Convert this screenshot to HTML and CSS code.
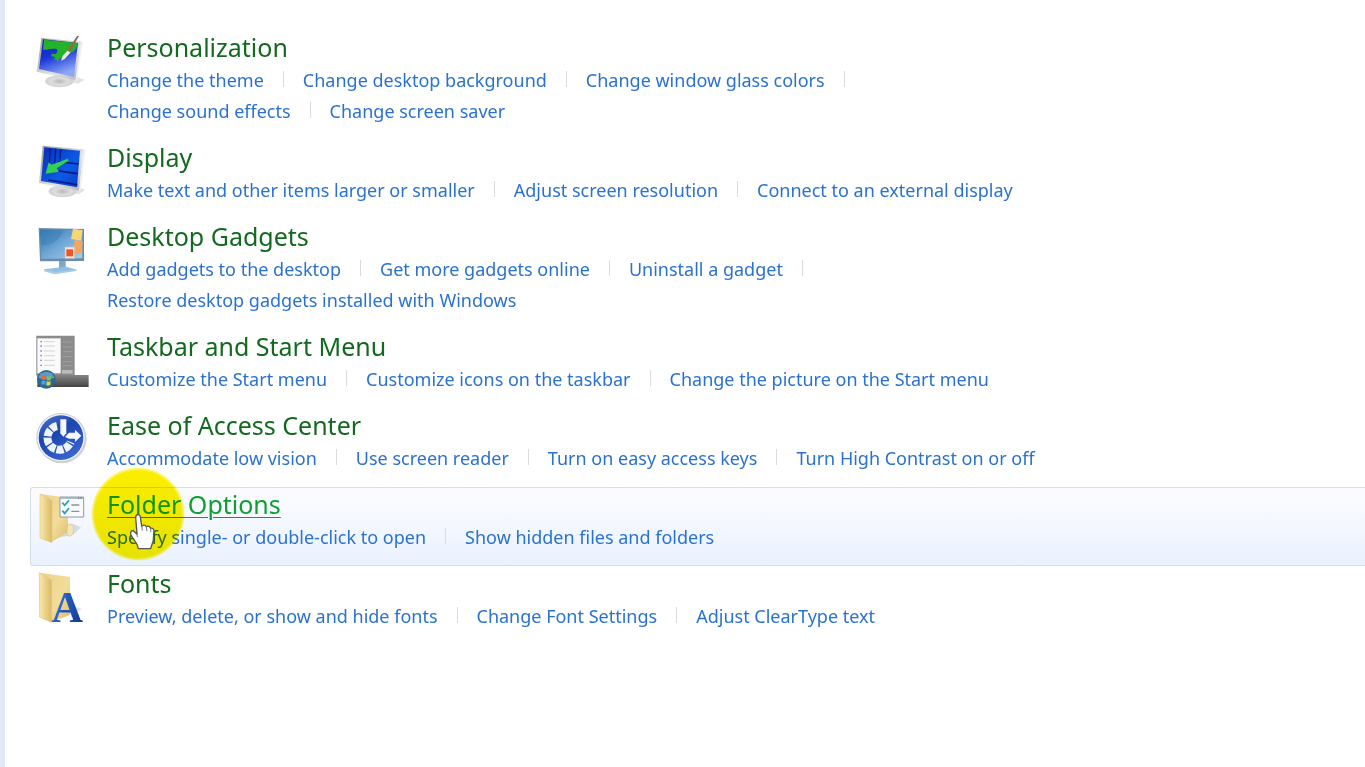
FILE: index.html
```html
<!DOCTYPE html>
<html lang="en">
<head>
<meta charset="utf-8">
<title>Appearance and Personalization</title>
<link rel="stylesheet" href="styles.css">
</head>
<body>
<main class="panel">
  <section class="category">
    <svg class="icon" viewBox="3 9 210 180" aria-hidden="true">
      <defs>
        <linearGradient id="screen" x1="0" y1="0" x2="0.4" y2="1"><stop offset="0" stop-color="#0b1fb5"/><stop offset="0.5" stop-color="#1c35d8"/><stop offset="1" stop-color="#8aa6f5"/></linearGradient>
        <linearGradient id="metal" x1="0" y1="0" x2="1" y2="1"><stop offset="0" stop-color="#9a9a9e"/><stop offset="0.6" stop-color="#e4e4e6"/><stop offset="1" stop-color="#b4b4b8"/></linearGradient>
        <radialGradient id="foot"><stop offset="0" stop-color="#b9b9ba"/><stop offset="0.6" stop-color="#dededf"/><stop offset="1" stop-color="#cfcfd1"/></radialGradient>
        <linearGradient id="folder-front" x1="0" y1="0" x2="1" y2="0"><stop offset="0" stop-color="#f9e9ae"/><stop offset="1" stop-color="#dcb964"/></linearGradient>
        <linearGradient id="folder-back" x1="0" y1="0" x2="1" y2="1"><stop offset="0" stop-color="#ecd48c"/><stop offset="0.6" stop-color="#f1dc99"/><stop offset="1" stop-color="#dcbb66"/></linearGradient>
      </defs>
      <path d="M140 138l24 8-20 12-24-6z" fill="#e3e3e6"/>
      <path d="M78 128h36l8 22H68z" fill="#b5b5b8"/>
      <ellipse cx="88" cy="151" rx="42" ry="18" fill="url(#foot)"/>
      <path d="M34 21l121 11-17 116L20 122z" fill="url(#metal)"/>
      <path d="M153 31l5 2-17 116-5-1z" fill="#f0f0f2"/>
      <path d="M39 25l105 11-12 102L27 114z" fill="url(#screen)"/>
      <path d="M42 26l100 10c0 15-6 26-23 29-6 15-22 18-29 17l-7 10-5-7-7 3 5-10-13-2 3-8 12 1c8-11 3-17-5-16-14-1-22 5-34 3z" fill="#25b22b"/>
      <path d="M112 59l10 5-18 20-11 5 5-14z" fill="#e6e8e9"/>
      <path d="M142 14l4 2-27 47-6-5z" fill="#b55a45"/>
      <path d="M142 14l4 2-9 16-5-3z" fill="#777"/>
    </svg>
    <div class="body">
      <h2 class="title"><a href="#">Personalization</a></h2>
      <ul class="tasks">
        <li><a href="#">Change the theme</a></li>
        <li><a href="#">Change desktop background</a></li>
        <li><a href="#">Change window glass colors</a></li>
        <li><a href="#">Change sound effects</a></li>
        <li><a href="#">Change screen saver</a></li>
      </ul>
    </div>
  </section>

  <section class="category">
    <svg class="icon" viewBox="3 15 210 180" aria-hidden="true">
      <defs><linearGradient id="blue" x1="0" y1="0" x2="1" y2="1"><stop offset="0" stop-color="#0a2bb4"/><stop offset="0.6" stop-color="#0d5be6"/><stop offset="1" stop-color="#0a3ac4"/></linearGradient></defs>
      <path d="M140 144l26 8-20 14-26-8z" fill="#e3e3e6"/>
      <path d="M84 138h36l6 20H76z" fill="#b5b5b8"/>
      <ellipse cx="98" cy="157" rx="42" ry="18" fill="url(#foot)"/>
      <path d="M38 20l122 11-12 124-121-23z" fill="url(#metal)"/>
      <path d="M160 31l6 2-14 121-5 1z" fill="#f0f0f2"/>
      <path d="M43 25l107 10-9 110-108-19z" fill="url(#blue)"/>
      <path d="M61 28l-3 50M77 29l-3 45M92 31l-2 30" stroke="#061f90" stroke-width="4"/>
      <path d="M85 68l61 7M78 95l65 9M55 123l87 14" stroke="#041c82" stroke-width="5"/>
      <path d="M113 59l3 6-36 23 7 10-40 6 9-34 9 7z" fill="#34cf56"/>
    </svg>
    <div class="body">
      <h2 class="title"><a href="#">Display</a></h2>
      <ul class="tasks">
        <li><a href="#">Make text and other items larger or smaller</a></li>
        <li><a href="#">Adjust screen resolution</a></li>
        <li><a href="#">Connect to an external display</a></li>
      </ul>
    </div>
  </section>

  <section class="category">
    <svg class="icon" viewBox="3 12 210 180" aria-hidden="true">
      <defs><linearGradient id="gadget" x1="0" y1="0" x2="1" y2="1"><stop offset="0" stop-color="#2f70ad"/><stop offset="0.5" stop-color="#70a8d6"/><stop offset="1" stop-color="#a5d0eb"/></linearGradient></defs>
      <path d="M87 124h20v25H87z" fill="#79a9cc"/>
      <path d="M42 151l66-8 32 9-66 13z" fill="#8fbee0"/>
      <path d="M42 151l32 8 66-7v4l-66 10-32-9z" fill="#a9cde5"/>
      <path d="M26 27l136 3v96l-132 1z" fill="#6b8ba6"/>
      <path d="M30 32l127 2v84l-123 1z" fill="url(#gadget)"/>
      <path d="M31 32l70 1c-12 32-34 46-68 47z" fill="#3c7fb9" opacity=".5"/>
      <path d="M129 29l29 5-5 31-30-5z" fill="#f5d875"/>
      <path d="M135 62l23 7-5 36-28-4z" fill="#f6a561"/>
      <path d="M105 84h29v34h-29z" fill="#eee8e6" stroke="#c7b9b4" stroke-width="2"/>
      <path d="M109 91h20v21h-20z" fill="#ed5525"/>
    </svg>
    <div class="body">
      <h2 class="title"><a href="#">Desktop Gadgets</a></h2>
      <ul class="tasks">
        <li><a href="#">Add gadgets to the desktop</a></li>
        <li><a href="#">Get more gadgets online</a></li>
        <li><a href="#">Uninstall a gadget</a></li>
        <li><a href="#">Restore desktop gadgets installed with Windows</a></li>
      </ul>
    </div>
  </section>

  <section class="category">
    <svg class="icon" viewBox="3 12 210 180" aria-hidden="true">
      <defs><linearGradient id="bar" x1="0" y1="0" x2="0" y2="1"><stop offset="0" stop-color="#858585"/><stop offset="1" stop-color="#444"/></linearGradient></defs>
      <path d="M19 20h115v120H19z" fill="#8b8b8b"/>
      <path d="M22 28h70v105H22z" fill="#fafafa"/>
      <path d="M42 38h32M42 51h32M42 66h32M42 80h32M42 94h32M42 109h32" stroke="#d4d4da" stroke-width="3"/>
      <path d="M31 38h5M31 51h5M31 66h5M31 80h5M31 94h5M31 109h5" stroke="#8485d0" stroke-width="4"/>
      <path d="M98 39h30M98 54h30M98 68h30M98 83h30M98 98h30M98 110h30" stroke="#9e9e9e" stroke-width="3"/>
      <path d="M96 123h32v11H96z" fill="#bbb"/>
      <path d="M22 138h154v36H22z" fill="url(#bar)"/>
      <circle cx="49" cy="151" r="28" fill="#286998"/>
      <path d="M25 146a25 25 0 0 1 48 0q-24 10-48 0" fill="#5e9cc0"/>
      <path d="M36 142q6-4 12-1l-1 12q-6-3-12 0z" fill="#ef6534"/>
      <path d="M51 142q6 3 12-1l-1 12q-6 3-12 1z" fill="#80c34e"/>
      <path d="M35 156q6-3 12 0l-1 12q-6-4-12-1z" fill="#45a5e7"/>
      <path d="M50 157q6 3 12-1l-1 12q-6 3-12 1z" fill="#f7cb42"/>
    </svg>
    <div class="body">
      <h2 class="title"><a href="#">Taskbar and Start Menu</a></h2>
      <ul class="tasks">
        <li><a href="#">Customize the Start menu</a></li>
        <li><a href="#">Customize icons on the taskbar</a></li>
        <li><a href="#">Change the picture on the Start menu</a></li>
      </ul>
    </div>
  </section>

  <section class="category">
    <svg class="icon" viewBox="3 21 210 180" aria-hidden="true">
      <defs><linearGradient id="disc" x1="0" y1="0" x2="0.6" y2="1"><stop offset="0" stop-color="#5475cc"/><stop offset="0.45" stop-color="#1b45b0"/><stop offset="1" stop-color="#3864cf"/></linearGradient></defs>
      <circle cx="96" cy="101" r="74" fill="#d8d8dc"/>
      <circle cx="93" cy="98" r="74" fill="#c5c9d1"/>
      <circle cx="93" cy="98" r="71" fill="#f4f5f8"/>
      <circle cx="93" cy="98" r="67" fill="url(#disc)"/>
      <path d="M81 63A36 36 0 1 0 122 111" fill="none" stroke="#eef2fb" stroke-width="24" stroke-dasharray="20 4"/>
      <path d="M91 43h18v42l-9 10-9-10z" fill="#f5f7fc"/>
      <path d="M105 96l12-13h18v-9l19 18-19 19v-10h-18z" fill="#f5f7fc"/>
    </svg>
    <div class="body">
      <h2 class="title"><a href="#">Ease of Access Center</a></h2>
      <ul class="tasks">
        <li><a href="#">Accommodate low vision</a></li>
        <li><a href="#">Use screen reader</a></li>
        <li><a href="#">Turn on easy access keys</a></li>
        <li><a href="#">Turn High Contrast on or off</a></li>
      </ul>
    </div>
  </section>

  <section class="category is-hover">
    <svg class="icon" viewBox="33 33 210 180" aria-hidden="true">
      <path d="M100 176l60-12 23-22-25-10z" fill="#d3dce6"/>
      <path d="M61 42l83 11v103l-50 31-34-15z" fill="url(#folder-back)"/>
      <path d="M143 135q18-10 18 12 0 20-12 22-10 0-8-17z" fill="#f3e5b7" stroke="#d6c28d" stroke-width="2"/>
      <path d="M60 42l36 19v127l-36-14z" fill="url(#folder-front)" stroke="#e2c880" stroke-width="2"/>
      <path d="M120 51h71v60h-71z" fill="#f8fafc" stroke="#909aa5" stroke-width="3"/>
      <path d="M121 54h69" stroke="#a4aeb9" stroke-width="5"/>
      <path d="M174 54h3M181 54h3" stroke="#4e5861" stroke-width="3"/>
      <path d="M127 68l7 8 13-15M127 92l7 8 13-16" fill="none" stroke="#299bc4" stroke-width="5"/>
      <path d="M154 75h24M154 94h24" stroke="#8b929a" stroke-width="4"/>
    </svg>
    <div class="body">
      <h2 class="title"><a href="#">Folder Options</a></h2>
      <ul class="tasks">
        <li><a href="#">Specify single- or double-click to open</a></li>
        <li><a href="#">Show hidden files and folders</a></li>
      </ul>
    </div>
    <span class="halo"></span>
    <svg class="hand" viewBox="0 0 84 112" aria-hidden="true">
      <path d="M28 5q7-2 9 7l4 28q9-7 14 1 10-4 13 5 11-1 10 10l-2 28-8 24H31l-4-13-18-27q-5-14 6-15l12 11-4-47q-1-10 5-12z" fill="#fff" stroke="#555" stroke-width="4" stroke-linejoin="round"/>
      <path d="M41 38l2 15M55 41l2 14M68 46l1 12M27 64l1 9" fill="none" stroke="#777" stroke-width="3"/>
    </svg>
  </section>

  <section class="category">
    <svg class="icon" viewBox="3 6 210 180" aria-hidden="true">
      <defs><linearGradient id="letter" x1="0" y1="0" x2="1" y2="0.6"><stop offset="0" stop-color="#5d96e5"/><stop offset="0.5" stop-color="#215ac1"/><stop offset="1" stop-color="#163d94"/></linearGradient></defs>
      <path d="M120 152l35-30-18-5z" fill="#dfe2e8"/>
      <path d="M29 14l91 13v114l-59 22-31-16z" fill="url(#folder-back)"/>
      <path d="M28 14l37 22v127l-36-16z" fill="url(#folder-front)" stroke="#e2c880" stroke-width="2"/>
      <text class="font-mark" x="64" y="162" fill="url(#letter)">A</text>
    </svg>
    <div class="body">
      <h2 class="title"><a href="#">Fonts</a></h2>
      <ul class="tasks">
        <li><a href="#">Preview, delete, or show and hide fonts</a></li>
        <li><a href="#">Change Font Settings</a></li>
        <li><a href="#">Adjust ClearType text</a></li>
      </ul>
    </div>
  </section>
</main>
</body>
</html>
```
FILE: styles.css
```css
* {
  box-sizing: border-box;
}

body {
  margin: 0;
  background: #fff;
  font-family: "Noto Sans", "Open Sans", sans-serif;
}

.panel {
  min-height: 100vh;
  padding: 30px 0 30px 25px;
  border-left: 5px solid #e3e9f9;
}

.category {
  position: relative;
  display: grid;
  grid-template-columns: 70px minmax(0, 940px);
  column-gap: 6px;
  padding: 0 0 12px;
  border: 1px solid transparent;
  border-right: 0;
  border-radius: 3px 0 0 3px;
}

.category.is-hover {
  border-color: #d5dfec;
  background: linear-gradient(#fcfcff, #eaf2fe);
}

.icon {
  width: 70px;
  height: 60px;
  margin-top: 3px;
  overflow: visible;
}

.font-mark {
  font: bold 132px "Liberation Serif", serif;
}

.title {
  margin: 0 0 2px;
  font-size: 25px;
  font-weight: 400;
  line-height: 32px;
}

.title a {
  color: #136a1f;
  text-decoration: none;
}

.is-hover .title a {
  color: #0f9f30;
  text-decoration: underline;
  text-decoration-color: #0f9f30;
  text-decoration-thickness: 1px;
  text-underline-offset: 3px;
}

.tasks {
  display: flex;
  flex-wrap: wrap;
  margin: 0;
  padding: 0;
  list-style: none;
  font-size: 18px;
  line-height: 31px;
}

.tasks li {
  display: flex;
  white-space: nowrap;
}

.tasks li:not(:last-child)::after {
  content: "";
  width: 1px;
  height: 16px;
  margin: 6px 19px 0;
  background: #d9dce0;
}

.tasks a {
  color: #2a72cf;
  text-decoration: none;
}

.halo {
  position: absolute;
  top: -21px;
  left: 60px;
  width: 94px;
  height: 94px;
  border-radius: 50%;
  background: radial-gradient(closest-side, #faee00 92%, rgba(255, 244, 60, 0.7) 97%, rgba(255, 250, 150, 0));
  mix-blend-mode: multiply;
  pointer-events: none;
}

.hand {
  position: absolute;
  top: 25px;
  left: 97px;
  width: 28px;
  height: 37px;
  pointer-events: none;
}
```
